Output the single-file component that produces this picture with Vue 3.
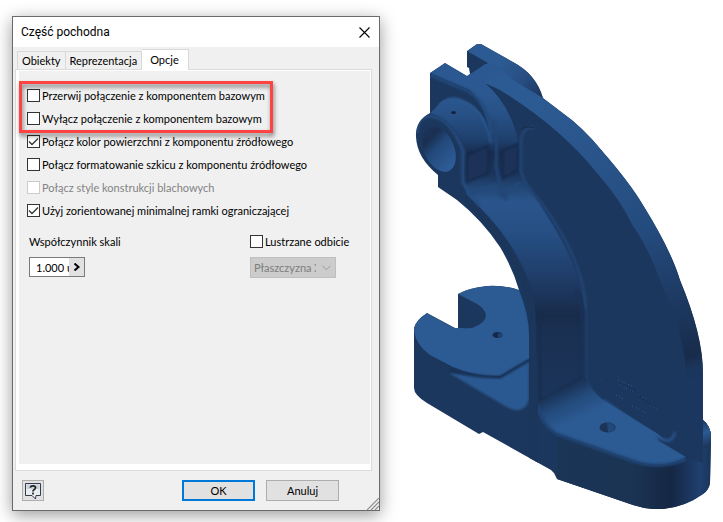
<script setup>
import { ref } from 'vue'

const tabs = ['Obiekty', 'Reprezentacja', 'Opcje']
const activeTab = ref('Opcje')

// opcje w czerwonej ramce
const linkOptions = ref([
  { id: 'break', label: 'Przerwij połączenie z komponentem bazowym', checked: false },
  { id: 'suppress', label: 'Wyłącz połączenie z komponentem bazowym', checked: false },
])

const options = ref([
  { id: 'color', label: 'Połącz kolor powierzchni z komponentu źródłowego', checked: true },
  { id: 'sketch', label: 'Połącz formatowanie szkicu z komponentu źródłowego', checked: false },
  { id: 'sheet', label: 'Połącz style konstrukcji blachowych', checked: false, disabled: true },
  { id: 'box', label: 'Użyj zorientowanej minimalnej ramki ograniczającej', checked: true },
])

const scale = ref('1.000 ul')
const mirror = ref(false)
const plane = ref('XY')
</script>

<template>
  <main class="page">
    <section class="dialog" role="dialog" aria-labelledby="dialog-title">
      <header class="titlebar">
        <h1 id="dialog-title">Część pochodna</h1>
        <button class="close" aria-label="Zamknij">
          <svg viewBox="0 0 11 11" width="11" height="11">
            <path d="M.5 .5L10.5 10.5M10.5 .5L.5 10.5" stroke="#000" stroke-width="1.1" />
          </svg>
        </button>
      </header>

      <nav class="tabs" role="tablist">
        <button
          v-for="tab in tabs"
          :key="tab"
          role="tab"
          class="tab"
          :class="{ active: tab === activeTab }"
          :aria-selected="tab === activeTab"
          @click="activeTab = tab"
        >{{ tab }}</button>
      </nav>

      <div class="pane">
        <div class="highlight">
          <label v-for="o in linkOptions" :key="o.id" class="check">
            <input type="checkbox" v-model="o.checked" />
            <span>{{ o.label }}</span>
          </label>
        </div>
        <div class="options">
          <label v-for="o in options" :key="o.id" class="check" :class="{ disabled: o.disabled }">
            <input type="checkbox" v-model="o.checked" :disabled="o.disabled" />
            <span>{{ o.label }}</span>
          </label>
        </div>

        <div class="bottom">
          <div class="field">
            <label class="caption" for="scale">Współczynnik skali</label>
            <div class="scale">
              <input id="scale" type="text" v-model="scale" />
              <button aria-label="Więcej">
                <svg viewBox="0 0 8 8" width="8" height="8">
                  <path d="M1.5 .5L5.5 4L1.5 7.5" fill="none" stroke="#000" stroke-width="2" />
                </svg>
              </button>
            </div>
          </div>
          <div class="field">
            <label class="check">
              <input type="checkbox" v-model="mirror" />
              <span>Lustrzane odbicie</span>
            </label>
            <div class="plane">
              <select v-model="plane" disabled aria-label="Płaszczyzna odbicia">
                <option value="XY">Płaszczyzna XY</option>
                <option value="XZ">Płaszczyzna XZ</option>
                <option value="YZ">Płaszczyzna YZ</option>
              </select>
              <svg viewBox="0 0 9 6" width="9" height="6">
                <path d="M.5 .8L4.5 4.8L8.5 .8" fill="none" stroke="#9a9a9a" />
              </svg>
            </div>
          </div>
        </div>
      </div>

      <footer class="footer">
        <button class="help" aria-label="Pomoc">
          <svg viewBox="0 0 18 18" width="18" height="18">
            <path d="M1.5 1.5H16.5V13.5H12L11.5 17L8 13.5H1.5Z" fill="#e9edf2" stroke="#333c4a" />
            <path d="M2.5 2.5H15.5V7H2.5Z" fill="#c8d0da" />
            <path d="M6.3 5.7Q6.5 3.8 9 3.8Q11.5 3.8 11.5 5.8Q11.5 7 10 7.8Q9 8.4 9 9.6M9 10.6V12.4" fill="none" stroke="#222" stroke-width="1.7" />
          </svg>
        </button>
        <button class="btn primary">OK</button>
        <button class="btn">Anuluj</button>
        <svg class="grip" viewBox="0 0 12 12" width="12" height="12">
          <path d="M0 12L12 0M4 12L12 4M8 12L12 8" stroke="#8a8a8a" stroke-width="1.2" />
        </svg>
      </footer>
    </section>

    <svg class="model" viewBox="414 43 297 466" role="img" aria-label="Model wspornika">
      <defs>
        <linearGradient id="band" gradientUnits="userSpaceOnUse" x1="460" y1="95" x2="460" y2="400">
          <stop offset="0" stop-color="#2b5890" />
          <stop offset=".07" stop-color="#275085" />
          <stop offset=".15" stop-color="#1e3f6c" />
          <stop offset=".19" stop-color="#182c4d" />
          <stop offset=".26" stop-color="#1b3459" />
          <stop offset=".3" stop-color="#224674" />
          <stop offset=".35" stop-color="#2a558c" />
          <stop offset=".45" stop-color="#264f84" />
          <stop offset=".58" stop-color="#203f6c" />
          <stop offset=".72" stop-color="#182c4a" />
          <stop offset=".77" stop-color="#1a3052" />
          <stop offset="1" stop-color="#1b345a" />
        </linearGradient>
        <linearGradient id="arc" gradientUnits="userSpaceOnUse" x1="520" y1="90" x2="640" y2="390">
          <stop offset="0" stop-color="#2c5b93" />
          <stop offset=".3" stop-color="#29548a" />
          <stop offset=".55" stop-color="#244b7d" />
          <stop offset=".75" stop-color="#1e3c66" />
          <stop offset=".96" stop-color="#182c4b" />
          <stop offset="1" stop-color="#1b365c" />
        </linearGradient>
        <linearGradient id="bore" gradientUnits="userSpaceOnUse" x1="430" y1="126" x2="447" y2="168">
          <stop offset="0" stop-color="#1b3459" />
          <stop offset=".25" stop-color="#1a3052" />
          <stop offset=".5" stop-color="#23497b" />
          <stop offset="1" stop-color="#2d5c96" />
        </linearGradient>
        <linearGradient id="floor" gradientUnits="userSpaceOnUse" x1="558" y1="388" x2="574" y2="421">
          <stop offset="0" stop-color="#192d4e" />
          <stop offset=".5" stop-color="#234b7c" />
          <stop offset="1" stop-color="#2c5a93" />
        </linearGradient>
        <linearGradient id="wall" gradientUnits="userSpaceOnUse" x1="557" y1="0" x2="711" y2="0">
          <stop offset="0" stop-color="#1b3557" />
          <stop offset=".48" stop-color="#1b3454" />
          <stop offset=".74" stop-color="#152743" />
          <stop offset=".85" stop-color="#1b355d" />
          <stop offset=".93" stop-color="#1f406f" />
          <stop offset="1" stop-color="#193559" />
        </linearGradient>
        <linearGradient id="back" gradientUnits="userSpaceOnUse" x1="500" y1="60" x2="542" y2="98">
          <stop offset="0" stop-color="#2c5b93" />
          <stop offset=".5" stop-color="#284f84" />
          <stop offset="1" stop-color="#1c365c" />
        </linearGradient>
        <linearGradient id="boss" gradientUnits="userSpaceOnUse" x1="700" y1="420" x2="711" y2="445">
          <stop offset="0" stop-color="#1c365c" />
          <stop offset=".5" stop-color="#2c5a93" />
          <stop offset="1" stop-color="#1c365c" />
        </linearGradient>
        <filter id="soft" filterUnits="userSpaceOnUse" x="414" y="43" width="297" height="466">
          <feGaussianBlur stdDeviation="1.3" />
        </filter>
        <clipPath id="body">
          <path d="M467 51L477 44H481L513 62Q536 74 543 98L560 111Q583 127 603 152Q630 183 643 205Q671 250 680 280Q703 335 703 373V420Q711 426 711 437L710 483Q709 490 703 494Q685 507 663 509Q648 510 633 505L557 479L554 473L551 470L483 432L479 434L427 403Q414 395 414 388V328Q416 320 427 313L455 328H458V294Q468 288 487 286Q505 285 519 290Q513 269 500 247Q482 220 457 200L438 187V175Q417 158 416 137Q415 121 430 113V73L445 63L467 76L470 74L469 68L467 67Z" />
        </clipPath>
      </defs>

      <g clip-path="url(#body)">
        <rect x="414" y="43" width="297" height="466" fill="#1c375d" />

        <!-- górne ucho -->
        <path d="M467 51L477 44H481L513 62Q536 74 543 98L503 80L488 63Z" fill="url(#back)" />
        <path d="M430 73L445 63L467 76L488 63L513 78L485 83Q511 105 519 145V196H490V140Q488 108 470 90Z" fill="url(#band)" />
        <path d="M485 64L504 68L512 82L486 84L467 77Z" fill="#2b5890" />
        <path d="M430 75L468 91Q488 104 492 134" fill="none" stroke="#244a7b" stroke-width="3" filter="url(#soft)" />

        <!-- wewnętrzny łuk -->
        <path d="M464 186L467 195Q522 245 535 303L538 405L585 378V320Q585 277 553 225Q540 203 524 181L519 170H464Z" fill="url(#band)" />
        <path d="M467 200Q518 246 531 303Q534 320 534 402" fill="none" stroke="#1b3459" stroke-width="4" filter="url(#soft)" />
        <path d="M468 194L494 185L502 196L520 182" fill="none" stroke="#244879" stroke-width="4" filter="url(#soft)" />

        <!-- piasta z otworem -->
        <path d="M430 113L438 106Q442 98 455 98Q487 104 491 145V181L466 188V150Q454 119 430 113Z" fill="url(#band)" />
        <path d="M437 109Q442 99 455 98Q484 105 491 143" fill="none" stroke="#2a568d" stroke-width="2" filter="url(#soft)" />
        <path d="M417 133Q417 116 430 116Q451 118 463 151V183Q470 195 480 206" fill="none" stroke="#254b7e" stroke-width="3" filter="url(#soft)" />
        <path d="M467 156L488 146V173L467 182Z" fill="#1c3359" stroke="#172b4b" stroke-width="2" filter="url(#soft)" />
        <path d="M503 151L518 144V170L503 178Z" fill="#1b3358" stroke="#172b4b" stroke-width="2" filter="url(#soft)" />
        <path d="M493 120Q498 137 496 165Q499 188 507 200" fill="none" stroke="#234575" stroke-width="3" filter="url(#soft)" />
        <ellipse cx="439" cy="149" rx="15" ry="24" transform="rotate(-24 439 149)" fill="url(#bore)" />
        <ellipse cx="453.500" cy="112.500" rx="2.500" ry="1.500" fill="#14233d" />

        <!-- żebro -->
        <path d="M485 83L503 74L543 98L560 111Q583 127 603 152Q630 183 643 205Q671 250 680 280Q703 335 703 373V385L686 405V380Q686 335 660 280Q648 247 633 226Q620 199 597 173Q560 127 500 90Z" fill="url(#arc)" />
        <path d="M535 128Q522 125 521 143V170Q522 181 540 201Q584 260 586 310" fill="none" stroke="#224473" stroke-width="3" filter="url(#soft)" />
        <path d="M586 310V377Q588 389 603 400" fill="none" stroke="#1f3e69" stroke-width="3" filter="url(#soft)" />
        <path d="M603 400L658 438" fill="none" stroke="#274f85" stroke-width="3" filter="url(#soft)" />
        <path d="M576 290Q582 305 582 320V378" fill="none" stroke="#1a3054" stroke-width="3" filter="url(#soft)" />
        <path d="M521 130Q525 125 535 128" fill="none" stroke="#162b49" />
        <path d="M540 320V402L582 378" fill="none" stroke="#192d4d" stroke-width="2" filter="url(#soft)" />

        <!-- podstawa z prawej -->
        <path d="M557 433L633 460Q660 470 686 458V380H711V509H557Z" fill="url(#wall)" />
        <path d="M686 380V457L703 463V375Z" fill="#1b375f" />
        <path d="M538 402L585 377Q590 390 603 400L658 434L686 457Q662 470 633 460L557 433Q542 424 538 402Z" fill="url(#floor)" />
        <path d="M537 405Q542 425 557 434L633 461Q660 470 686 459" fill="none" stroke="#234778" stroke-width="3" filter="url(#soft)" />
        <path d="M657 437Q673 445 675 431L686 440V457L659 441Z" fill="#1c375d" />
        <path d="M657 437Q672 446 675 432" fill="none" stroke="#285187" stroke-width="3" filter="url(#soft)" />
        <path d="M703 420Q711 426 711 437V445L703 449Z" fill="url(#boss)" />
        <ellipse cx="607.500" cy="427.500" rx="8" ry="5" fill="#1b3458" />
        <path d="M607 423Q614 423 615 428Q613 432 608 432Z" fill="#23497b" />

        <!-- grawer -->
        <path d="M604 378L612 382M617 380L636 390M620 384L644 397M629 390L650 403M640 397L658 410" fill="none" stroke="#172c4c" stroke-dasharray="1 2 2 3" />
        <path d="M618 380L634 387M620 385L646 399M616 395L625 400M632 406L646 413M650 406L659 410" fill="none" stroke="#2f5d95" stroke-dasharray="1 3 1 2" />

        <!-- podstawa z lewej -->
        <path d="M449 373L480 376L500 378L529 361V398Q527 411 515 410Q510 409 505 406Z" fill="#2b5890" filter="url(#soft)" />
        <path d="M529 330V470H538V405L535 303Z" fill="#1c365b" />
        <path d="M414 328Q416 320 427 313L450 326Q457 329 472 328Q486 323 486 315Q485 309 477 304L458 294Q468 288 487 286Q505 285 519 290Q529 315 529 335V359L500 376Q474 376 453 367L430 355Q414 343 414 328Z" fill="#2c5a92" />
        <path d="M450 370Q475 378 500 377L529 360" fill="none" stroke="#182f50" stroke-width="2" filter="url(#soft)" />
        <ellipse cx="497.500" cy="335" rx="5" ry="3" fill="#15284a" />
        <path d="M498 333L502 334V336L498 338Z" fill="#23436f" />
      </g>
    </svg>
  </main>
</template>

<style>
body {
  background: #fff;
}
</style>

<style scoped>
.page {
  display: grid;
  grid-template-columns: 368fr 297fr;
  column-gap: 34px;
  box-sizing: border-box;
  min-height: 100vh;
  padding: 16px 12px 11px;
  font-family: Lato, "Noto Sans", sans-serif;
  font-size: 11px;
  line-height: 13px;
  color: #000;
}

button, input, select {
  margin: 0;
  padding: 0;
  font: inherit;
  color: inherit;
  border-radius: 0;
  box-sizing: border-box;
}

.dialog {
  display: flex;
  flex-direction: column;
  background: #f0f0f0;
  border: 1px solid #6a6a6a;
  box-shadow: 0 4px 16px rgba(0, 0, 0, 0.4);
}

.titlebar {
  display: flex;
  align-items: center;
  justify-content: space-between;
  height: 30px;
  padding: 0 9px 0 8px;
  background: #fff;
}

.titlebar h1 {
  margin: 0;
  font-family: Roboto, sans-serif;
  font-size: 12px;
  font-weight: 400;
}

.close {
  display: flex;
  border: none;
  background: none;
}

/* Zakładki */
.tabs {
  display: flex;
  align-items: flex-end;
  height: 22px;
  padding-left: 4px;
}

.tab {
  height: 18px;
  padding: 0 4px;
  border: 1px solid #d9d9d9;
  border-bottom: none;
  background: #f0f0f0;
}

.tab + .tab {
  border-left: none;
}

.tab.active {
  position: relative;
  z-index: 1;
  height: 21px;
  margin-bottom: -1px;
  padding: 0 9px 2px 8px;
  background: #fff;
}

.pane {
  flex: 1;
  margin: 0 7px 0 2px;
  padding-top: 11px;
  border: 1px solid #dcdcdc;
  background: #f0f0f0;
  box-shadow: inset 3px 1px #fff, inset -1px -6px #fff;
  padding-left: 3px;
}

/* Pola wyboru */
.check {
  display: flex;
  align-items: center;
  gap: 2px;
  height: 13px;
  white-space: nowrap;
}

.check input {
  appearance: none;
  flex: none;
  width: 13px;
  height: 13px;
  border: 1px solid #333;
  background: #fff;
}

.check input:checked {
  background: #fff url("data:image/svg+xml,%3Csvg xmlns='http://www.w3.org/2000/svg' viewBox='0 0 11 11'%3E%3Cpath d='M1 5.500L4 8.500L10 2.500' fill='none' stroke='%23333' stroke-width='1.300'/%3E%3C/svg%3E");
}

.check.disabled {
  color: #838383;
}

.check.disabled input {
  border-color: #ccc;
}

.highlight {
  position: relative;
  display: flex;
  flex-direction: column;
  gap: 10px;
  width: fit-content;
  padding: 8px;
}

.highlight::after {
  content: "";
  position: absolute;
  inset: 0;
  border: 3px solid #ff4343;
  filter: drop-shadow(1px 3px 2px rgba(0, 0, 0, 0.5));
  pointer-events: none;
}

.options {
  display: flex;
  flex-direction: column;
  gap: 10px;
  padding: 2px 8px 0;
}

.bottom {
  display: grid;
  grid-template-columns: 221fr 121fr;
  padding: 18px 0 0 10px;
}

.field {
  display: flex;
  flex-direction: column;
  align-items: flex-start;
  gap: 9px;
}

.caption {
  height: 13px;
}

.scale {
  display: flex;
  box-sizing: border-box;
  width: 56px;
  height: 20px;
  border: 1px solid #7a7a7a;
  background: #fff;
}

.scale input {
  flex: 1;
  min-width: 0;
  padding-left: 6px;
  border: none;
  background: #fff;
}

.scale button {
  display: flex;
  align-items: center;
  justify-content: center;
  width: 15px;
  border: none;
  background: #e1e1e1;
}

.plane {
  display: flex;
  align-items: center;
  box-sizing: border-box;
  width: 86px;
  height: 21px;
  padding-right: 4px;
  border: 1px solid #bfbfbf;
  background: #ccc;
}

.plane select {
  appearance: none;
  flex: 1;
  min-width: 0;
  margin-right: 6px;
  padding-left: 3px;
  border: none;
  background: none;
  color: #7c7c7c;
  opacity: 1;
  overflow: hidden;
  text-overflow: clip;
}

/* Stopka */
.footer {
  position: relative;
  display: flex;
  gap: 11px;
  padding: 9px 40px 9px 9px;
}

.help {
  display: flex;
  align-items: center;
  justify-content: center;
  width: 22px;
  height: 21px;
  margin-right: auto;
  border: 1px solid #adadad;
  background: #e1e1e1;
}

.btn {
  width: 73px;
  height: 21px;
  border: 1px solid #adadad;
  background: #e1e1e1;
}

.btn.primary {
  border: 2px solid #0078d7;
}

.grip {
  position: absolute;
  right: 0;
  bottom: 0;
}

.model {
  width: 100%;
  margin-top: 27px;
}
</style>
